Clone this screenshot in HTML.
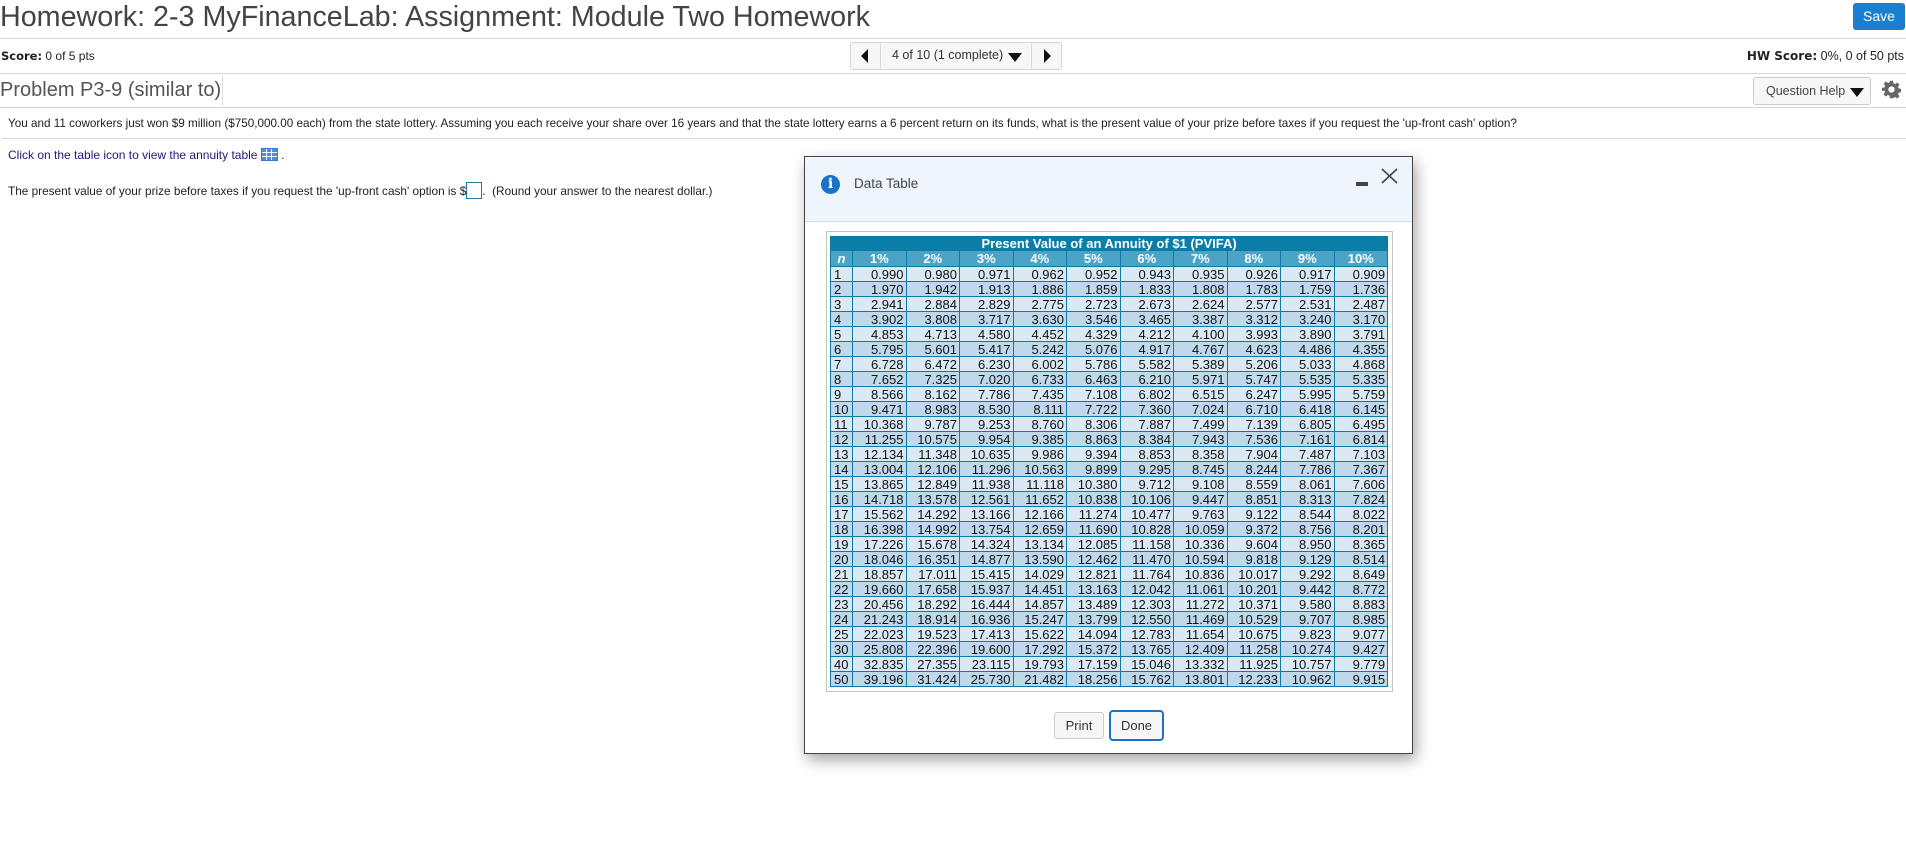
<!DOCTYPE html>
<html><head><meta charset="utf-8"><style>
*{box-sizing:border-box;margin:0;padding:0}
body{width:1906px;height:857px;background:#fff;font-family:"Liberation Sans",Arial,sans-serif;position:relative;overflow:hidden;color:#222}
.a{position:absolute}
.hl{position:absolute;height:1px;background:#cfd6e0}
#t td{border:1px solid #0b7ba6;height:15px;padding:0 2px 0 0;text-align:right;font-size:13px;line-height:13px;color:#111;white-space:nowrap}
#t td:first-child{text-align:left;padding-left:3px}
#t tr.o td{background:#dae9f3}
#t tr.e td{background:#bfd9eb}
#t th{background:#4ba4c8;color:#fff;font-size:13px;font-weight:bold;border:1px solid #0b7ba6;height:16px;padding:0}
</style></head><body>
<div class="a" style="left:0;top:0;font-size:28.7px;color:#444;line-height:34px">Homework: 2-3 MyFinanceLab: Assignment: Module Two Homework</div>
<div class="a" style="left:1853px;top:3px;width:52px;height:27px;background:#1a7fd0;border-radius:3px;color:#fff;font-size:14px;text-align:center;line-height:27px">Save</div>
<div class="hl" style="left:0;top:38px;width:1906px"></div>
<div class="a" style="left:1px;top:49px;font-size:12px;color:#222"><b style="font-family:'DejaVu Sans',sans-serif;font-size:11.5px">Score:</b> 0 of 5 pts</div>
<div class="a" style="left:850px;top:42px;width:212px;height:28px;border:1px solid #d8d8d8;border-radius:3px;background:#f7f7f7"></div>
<div class="a" style="left:880px;top:43px;width:1px;height:26px;background:#d8d8d8"></div>
<div class="a" style="left:1031px;top:43px;width:1px;height:26px;background:#d8d8d8"></div>
<svg class="a" style="left:860px;top:49px" width="10" height="14"><path d="M8 0L1 7L8 14Z" fill="#111"/></svg>
<svg class="a" style="left:1043px;top:49px" width="10" height="14"><path d="M1 0L8 7L1 14Z" fill="#111"/></svg>
<div class="a" style="left:892px;top:48px;font-size:12.5px;color:#333">4 of 10 (1 complete)</div>
<svg class="a" style="left:1008px;top:52px" width="14" height="10"><path d="M0 1H14L7 10Z" fill="#111"/></svg>
<div class="a" style="right:2px;top:49px;font-size:12.5px;color:#222"><b style="font-family:'DejaVu Sans',sans-serif;font-size:12px">HW Score:</b> 0%, 0 of 50 pts</div>
<div class="hl" style="left:0;top:73px;width:1906px"></div>
<div class="a" style="left:0;top:78px;font-size:20px;color:#555;line-height:24px">Problem P3-9 (similar to)</div>
<div class="a" style="left:222px;top:75px;width:1px;height:31px;background:#ddd"></div>
<div class="a" style="left:1753px;top:77px;width:118px;height:28px;border:1px solid #ccc;border-radius:3px;background:#f7f7f7;font-size:12.5px;color:#444;line-height:26px;padding-left:12px">Question Help</div>
<svg class="a" style="left:1850px;top:87px" width="14" height="10"><path d="M0 1H14L7 10Z" fill="#111"/></svg>
<svg class="a" style="left:1882px;top:80px" width="19" height="19" viewBox="0 0 24 24"><path fill="#666" d="M10 1h4l.6 3.2 2 .9 2.7-1.9 2.8 2.8-1.9 2.7.9 2 3.2.6v4l-3.2.6-.9 2 1.9 2.7-2.8 2.8-2.7-1.9-2 .9L14 23h-4l-.6-3.2-2-.9-2.7 1.9-2.8-2.8 1.9-2.7-.9-2L-.1 14v-4l3.2-.6.9-2L2.1 4.7l2.8-2.8 2.7 1.9 2-.9zM12 8a4 4 0 100 8 4 4 0 000-8z"/></svg>
<div class="hl" style="left:0;top:107px;width:1906px"></div>
<div class="a" style="left:8px;top:117px;font-size:11.7px;color:#222">You and 11 coworkers just won $9 million ($750,000.00 each) from the state lottery. Assuming you each receive your share over 16 years and that the state lottery earns a 6 percent return on its funds, what is the present value of your prize before taxes if you request the 'up-front cash' option?</div>
<div class="hl" style="left:2px;top:138px;width:1904px"></div>
<div class="a" style="left:8px;top:148px;font-size:12px;color:#1a1a7a">Click on the table icon to view the annuity table <span style="display:inline-block;width:17px;height:13px;background:#4a8ee0;vertical-align:-2px;border:1px solid #3a7bd0;background-image:linear-gradient(90deg,transparent 4px,#fff 4px,#fff 5px,transparent 5px,transparent 9px,#fff 9px,#fff 10px,transparent 10px),linear-gradient(0deg,transparent 3px,#fff 3px,#fff 4px,transparent 4px,transparent 7px,#fff 7px,#fff 8px,transparent 8px)"></span> .</div>
<div class="a" style="left:8px;top:182px;font-size:11.8px;color:#222">The present value of your prize before taxes if you request the 'up-front cash' option is $<span style="display:inline-block;width:16px;height:17px;border:1px solid #2a7a9a;vertical-align:-4px"></span>.&nbsp; (Round your answer to the nearest dollar.)</div>

<div class="a" style="left:804px;top:156px;width:609px;height:598px;background:#fff;border:1px solid #444;box-shadow:3px 6px 14px rgba(0,0,0,.35)">
 <div class="a" style="left:0;top:0;width:607px;height:65px;background:#eff5fc;border-bottom:1px solid #c6e0f4"></div>
 <div class="a" style="left:16px;top:18px;width:19px;height:19px;border-radius:50%;background:#1a72c9;color:#fff;font-weight:bold;font-family:'DejaVu Serif',serif;font-size:14px;text-align:center;line-height:19px">i</div>
 <div class="a" style="left:49px;top:19px;font-size:13.5px;color:#444">Data Table</div>
 <div class="a" style="left:551px;top:25px;width:12px;height:4px;background:#444"></div>
 <svg class="a" style="left:576px;top:11px" width="17" height="16"><path d="M1 1L16 15M16 1L1 15" stroke="#444" stroke-width="1.6"/></svg>
 <div class="a" style="left:21px;top:74px;width:567px;height:461px;border:1px solid #c4c4c4"></div>
 <table id="t" class="a" style="left:25px;top:79px;width:557px;border-collapse:collapse;table-layout:fixed">
 <colgroup><col style="width:22px"><col span="10" style="width:53.5px"></colgroup>
 <tr><th colspan="11" style="background:#0a7ea6;height:14px;line-height:13px">Present Value of an Annuity of $1 (PVIFA)</th></tr>
 <tr><th><i>n</i></th><th>1%</th><th>2%</th><th>3%</th><th>4%</th><th>5%</th><th>6%</th><th>7%</th><th>8%</th><th>9%</th><th>10%</th></tr>
 <tr class="o"><td>1</td><td>0.990</td><td>0.980</td><td>0.971</td><td>0.962</td><td>0.952</td><td>0.943</td><td>0.935</td><td>0.926</td><td>0.917</td><td>0.909</td></tr>
 <tr class="e"><td>2</td><td>1.970</td><td>1.942</td><td>1.913</td><td>1.886</td><td>1.859</td><td>1.833</td><td>1.808</td><td>1.783</td><td>1.759</td><td>1.736</td></tr>
 <tr class="o"><td>3</td><td>2.941</td><td>2.884</td><td>2.829</td><td>2.775</td><td>2.723</td><td>2.673</td><td>2.624</td><td>2.577</td><td>2.531</td><td>2.487</td></tr>
 <tr class="e"><td>4</td><td>3.902</td><td>3.808</td><td>3.717</td><td>3.630</td><td>3.546</td><td>3.465</td><td>3.387</td><td>3.312</td><td>3.240</td><td>3.170</td></tr>
 <tr class="o"><td>5</td><td>4.853</td><td>4.713</td><td>4.580</td><td>4.452</td><td>4.329</td><td>4.212</td><td>4.100</td><td>3.993</td><td>3.890</td><td>3.791</td></tr>
 <tr class="e"><td>6</td><td>5.795</td><td>5.601</td><td>5.417</td><td>5.242</td><td>5.076</td><td>4.917</td><td>4.767</td><td>4.623</td><td>4.486</td><td>4.355</td></tr>
 <tr class="o"><td>7</td><td>6.728</td><td>6.472</td><td>6.230</td><td>6.002</td><td>5.786</td><td>5.582</td><td>5.389</td><td>5.206</td><td>5.033</td><td>4.868</td></tr>
 <tr class="e"><td>8</td><td>7.652</td><td>7.325</td><td>7.020</td><td>6.733</td><td>6.463</td><td>6.210</td><td>5.971</td><td>5.747</td><td>5.535</td><td>5.335</td></tr>
 <tr class="o"><td>9</td><td>8.566</td><td>8.162</td><td>7.786</td><td>7.435</td><td>7.108</td><td>6.802</td><td>6.515</td><td>6.247</td><td>5.995</td><td>5.759</td></tr>
 <tr class="e"><td>10</td><td>9.471</td><td>8.983</td><td>8.530</td><td>8.111</td><td>7.722</td><td>7.360</td><td>7.024</td><td>6.710</td><td>6.418</td><td>6.145</td></tr>
 <tr class="o"><td>11</td><td>10.368</td><td>9.787</td><td>9.253</td><td>8.760</td><td>8.306</td><td>7.887</td><td>7.499</td><td>7.139</td><td>6.805</td><td>6.495</td></tr>
 <tr class="e"><td>12</td><td>11.255</td><td>10.575</td><td>9.954</td><td>9.385</td><td>8.863</td><td>8.384</td><td>7.943</td><td>7.536</td><td>7.161</td><td>6.814</td></tr>
 <tr class="o"><td>13</td><td>12.134</td><td>11.348</td><td>10.635</td><td>9.986</td><td>9.394</td><td>8.853</td><td>8.358</td><td>7.904</td><td>7.487</td><td>7.103</td></tr>
 <tr class="e"><td>14</td><td>13.004</td><td>12.106</td><td>11.296</td><td>10.563</td><td>9.899</td><td>9.295</td><td>8.745</td><td>8.244</td><td>7.786</td><td>7.367</td></tr>
 <tr class="o"><td>15</td><td>13.865</td><td>12.849</td><td>11.938</td><td>11.118</td><td>10.380</td><td>9.712</td><td>9.108</td><td>8.559</td><td>8.061</td><td>7.606</td></tr>
 <tr class="e"><td>16</td><td>14.718</td><td>13.578</td><td>12.561</td><td>11.652</td><td>10.838</td><td>10.106</td><td>9.447</td><td>8.851</td><td>8.313</td><td>7.824</td></tr>
 <tr class="o"><td>17</td><td>15.562</td><td>14.292</td><td>13.166</td><td>12.166</td><td>11.274</td><td>10.477</td><td>9.763</td><td>9.122</td><td>8.544</td><td>8.022</td></tr>
 <tr class="e"><td>18</td><td>16.398</td><td>14.992</td><td>13.754</td><td>12.659</td><td>11.690</td><td>10.828</td><td>10.059</td><td>9.372</td><td>8.756</td><td>8.201</td></tr>
 <tr class="o"><td>19</td><td>17.226</td><td>15.678</td><td>14.324</td><td>13.134</td><td>12.085</td><td>11.158</td><td>10.336</td><td>9.604</td><td>8.950</td><td>8.365</td></tr>
 <tr class="e"><td>20</td><td>18.046</td><td>16.351</td><td>14.877</td><td>13.590</td><td>12.462</td><td>11.470</td><td>10.594</td><td>9.818</td><td>9.129</td><td>8.514</td></tr>
 <tr class="o"><td>21</td><td>18.857</td><td>17.011</td><td>15.415</td><td>14.029</td><td>12.821</td><td>11.764</td><td>10.836</td><td>10.017</td><td>9.292</td><td>8.649</td></tr>
 <tr class="e"><td>22</td><td>19.660</td><td>17.658</td><td>15.937</td><td>14.451</td><td>13.163</td><td>12.042</td><td>11.061</td><td>10.201</td><td>9.442</td><td>8.772</td></tr>
 <tr class="o"><td>23</td><td>20.456</td><td>18.292</td><td>16.444</td><td>14.857</td><td>13.489</td><td>12.303</td><td>11.272</td><td>10.371</td><td>9.580</td><td>8.883</td></tr>
 <tr class="e"><td>24</td><td>21.243</td><td>18.914</td><td>16.936</td><td>15.247</td><td>13.799</td><td>12.550</td><td>11.469</td><td>10.529</td><td>9.707</td><td>8.985</td></tr>
 <tr class="o"><td>25</td><td>22.023</td><td>19.523</td><td>17.413</td><td>15.622</td><td>14.094</td><td>12.783</td><td>11.654</td><td>10.675</td><td>9.823</td><td>9.077</td></tr>
 <tr class="e"><td>30</td><td>25.808</td><td>22.396</td><td>19.600</td><td>17.292</td><td>15.372</td><td>13.765</td><td>12.409</td><td>11.258</td><td>10.274</td><td>9.427</td></tr>
 <tr class="o"><td>40</td><td>32.835</td><td>27.355</td><td>23.115</td><td>19.793</td><td>17.159</td><td>15.046</td><td>13.332</td><td>11.925</td><td>10.757</td><td>9.779</td></tr>
 <tr class="e"><td>50</td><td>39.196</td><td>31.424</td><td>25.730</td><td>21.482</td><td>18.256</td><td>15.762</td><td>13.801</td><td>12.233</td><td>10.962</td><td>9.915</td></tr>
 </table>
 <div class="a" style="left:249px;top:555px;width:50px;height:27px;border:1px solid #ccc;border-radius:3px;background:#f6f6f6;font-size:13px;color:#333;text-align:center;line-height:25px">Print</div>
 <div class="a" style="left:304px;top:553px;width:55px;height:31px;border:2px solid #1a72c9;border-radius:4px;background:#f6f6f6;font-size:13px;color:#333;text-align:center;line-height:27px">Done</div>
</div>
</body></html>
